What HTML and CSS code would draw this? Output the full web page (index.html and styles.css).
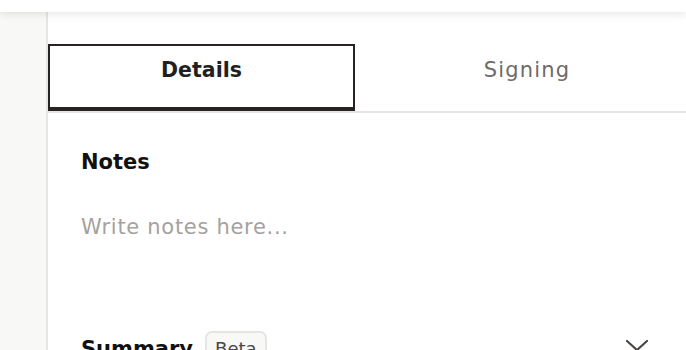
FILE: index.html
```html
<!DOCTYPE html>
<html>
<head>
<meta charset="utf-8">
<link rel="stylesheet" href="styles.css">
</head>
<body>
<header class="topbar"></header>
<div class="layout">
  <aside class="sidebar"></aside>
  <main class="panel">
    <nav class="tabs">
      <button class="tab tab-active">Details</button>
      <button class="tab tab-idle">Signing</button>
    </nav>
    <section class="notes">
      <h2 class="section-title">Notes</h2>
      <div class="placeholder">Write notes here...</div>
    </section>
    <section class="summary">
      <h2 class="section-title">Summary</h2>
      <span class="badge">Beta</span>
      <svg class="chevron" width="24" height="24" viewBox="0 0 24 24" fill="none" stroke="#4a4644" stroke-width="2.2" stroke-linecap="round" stroke-linejoin="round"><path d="M2 4 L12 13 L22 4"/></svg>
    </section>
  </main>
</div>
</body>
</html>
```

FILE: styles.css
```css
* { box-sizing: border-box; }
html, body {
  margin: 0;
  height: 100%;
  overflow: hidden;
  background: #fff;
  font-family: "DejaVu Sans", "Noto Sans", sans-serif;
  color: #231f1f;
}
.topbar {
  height: 12px;
  background: #fff;
  position: relative;
  z-index: 2;
  box-shadow: 0 2px 8px rgba(0,0,0,0.10);
}
.layout {
  display: flex;
  height: calc(100% - 12px);
}
.sidebar {
  width: 48px;
  flex: none;
  background: #f8f8f6;
  border-right: 2px solid #e6e5e3;
}
.panel {
  flex: 1;
  padding-top: 32px;
  overflow: hidden;
}
.tabs {
  display: flex;
  border-bottom: 2px solid #e6e5e3;
  width: 700px;
}
.tab {
  font-family: inherit;
  background: #fff;
  border: none;
  height: 67px;
  font-size: 21px;
  color: #6f6a67;
  padding: 0 0 15px;
  width: 344px;
  flex: none;
}
.tab-idle {
  letter-spacing: 1.2px;
}
.tab-active {
  width: 307px;
  color: #231f1f;
  font-weight: 700;
  font-size: 20.5px;
  border: 2px solid #262322;
  border-bottom-width: 4px;
  padding-bottom: 13px;
}
.notes {
  padding: 34px 33px 0;
}
.section-title {
  margin: 0;
  font-size: 21px;
  font-weight: 700;
  color: #111;
  line-height: 30px;
}
.placeholder {
  margin-top: 35px;
  font-size: 21px;
  letter-spacing: 0.7px;
  color: #a5a19e;
  line-height: 30px;
}
.summary {
  display: flex;
  align-items: center;
  padding: 0 0 0 33px;
  margin-top: 89px;
}
.badge {
  margin-left: 12px;
  border: 2px solid #e6e5e3;
  border-radius: 7px;
  background: #f8f8f6;
  color: #4a4644;
  font-size: 18px;
  padding: 5px 8px;
}
.chevron {
  margin-left: auto;
  margin-right: 37px;
  margin-top: 0;
}
```
